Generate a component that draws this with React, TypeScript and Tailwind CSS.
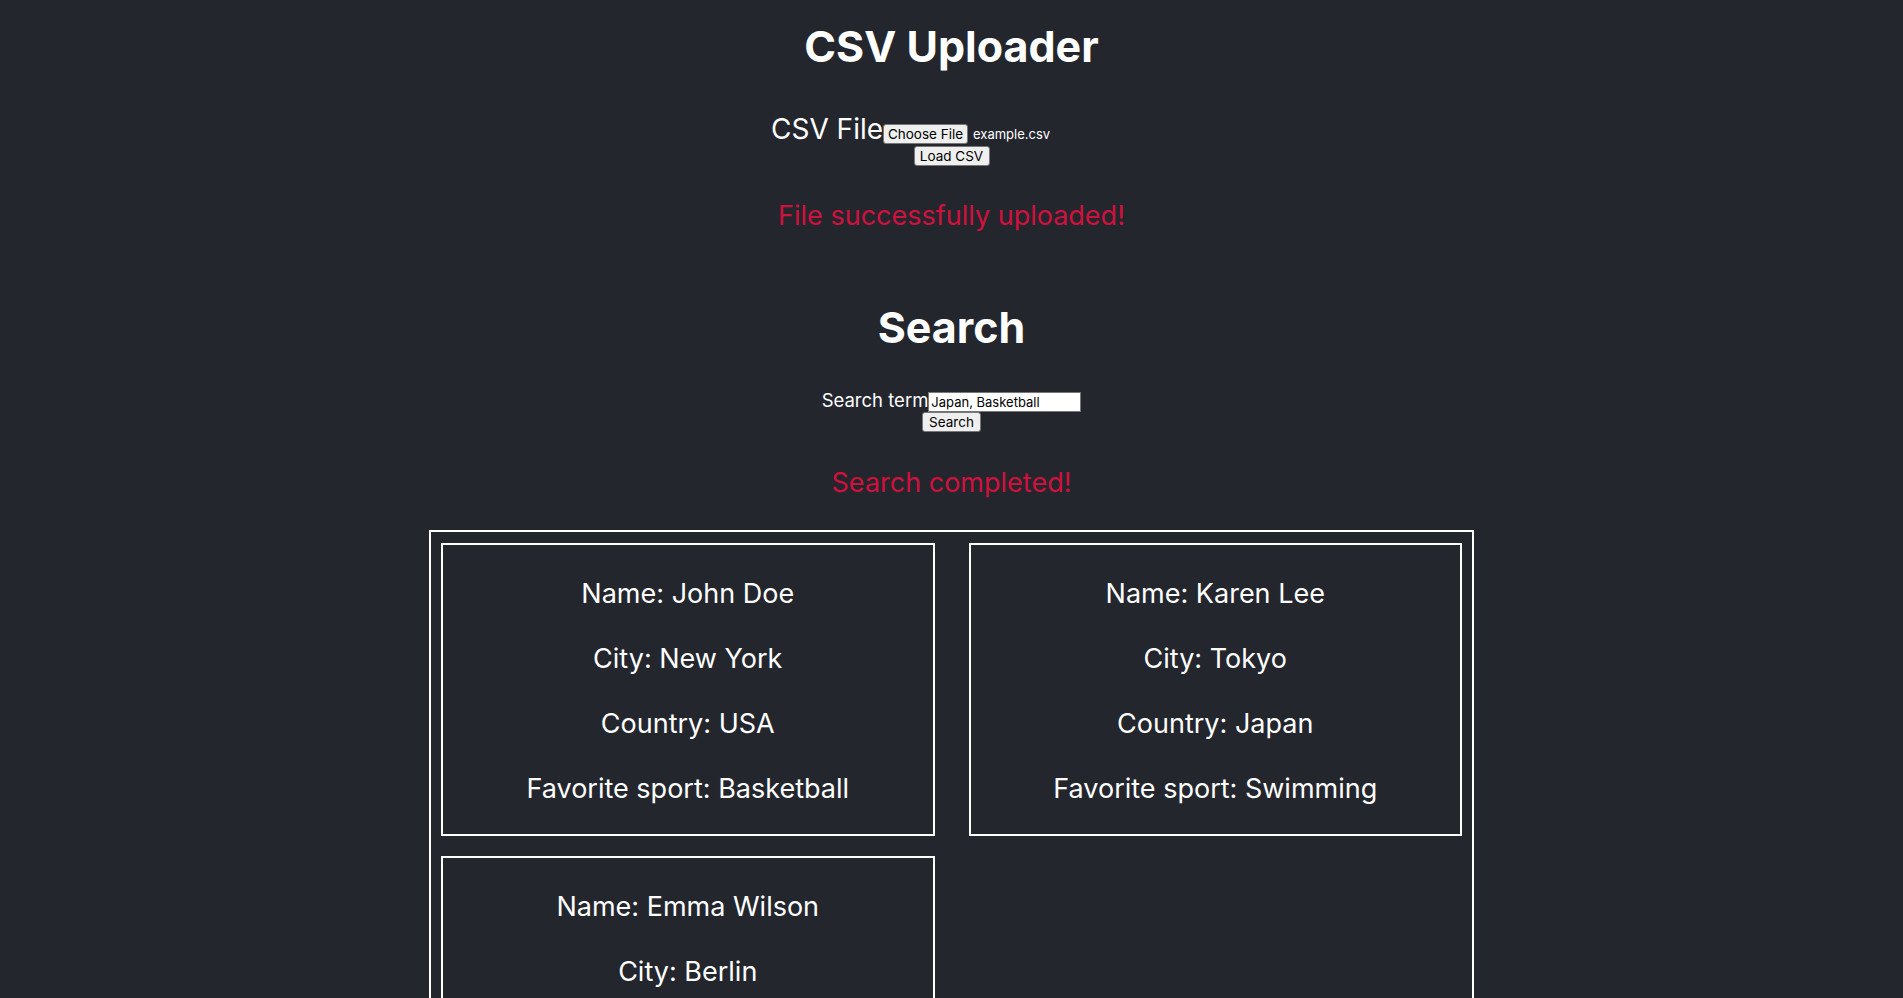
import React from "react";

type Person = {
  name: string;
  city: string;
  country: string;
  sport: string;
};

const results: Person[] = [
  { name: "John Doe", city: "New York", country: "USA", sport: "Basketball" },
  { name: "Karen Lee", city: "Tokyo", country: "Japan", sport: "Swimming" },
  { name: "Emma Wilson", city: "Berlin", country: "Germany", sport: "Basketball" },
];

function NativeButton({ label, width }: { label: string; width: string }) {
  return (
    <button
      type="button"
      className={`inline-flex h-[20px] items-center justify-center rounded-[3px] border border-[#767676] bg-[#efefef] text-[13.5px] leading-[16px] text-black ${width}`}
    >
      {label}
    </button>
  );
}

function PersonCard({ person }: { person: Person }) {
  return (
    <div className="flex flex-col gap-[28px] border-2 border-white pb-[27px] pt-[30px] text-[27px] leading-[37px]">
      <p>Name: {person.name}</p>
      <p>City: {person.city}</p>
      <p>Country: {person.country}</p>
      <p>Favorite sport: {person.sport}</p>
    </div>
  );
}

export default function App() {
  return (
    <div
      className="min-h-screen bg-[#24262e] pb-10 text-center text-white"
      style={{ fontFamily: "Inter, 'Noto Sans', sans-serif" }}
    >
      <h1 className="pt-[20px] text-[43px] font-bold leading-[53px]">CSV Uploader</h1>

      <form className="mt-[39px]">
        <div className="flex items-baseline justify-center">
          <label className="text-[28px] leading-[35px]">CSV File</label>
          <div className="flex w-[249px] items-baseline">
            <NativeButton label="Choose File" width="w-[85px]" />
            <span className="ml-[5px] text-[13px]">example.csv</span>
          </div>
        </div>
        <div className="-mt-px flex justify-center">
          <NativeButton label="Load CSV" width="w-[76px]" />
        </div>
      </form>

      <p className="mt-[32px] text-[27px] leading-[35px] text-[#d0113d]">
        File successfully uploaded!
      </p>

      <h2 className="mt-[68px] text-[43px] font-bold leading-[53px]">Search</h2>

      <form className="mt-[34px]">
        <div className="flex items-baseline justify-center">
          <label className="text-[18.5px] leading-[24px]">Search term</label>
          <input
            type="text"
            readOnly
            value="Japan, Basketball"
            className="h-[20px] w-[153px] border border-[#767676] bg-white px-[2px] text-[13px] text-black outline-none"
          />
        </div>
        <div className="flex justify-center">
          <NativeButton label="Search" width="w-[59px]" />
        </div>
      </form>

      <p className="mt-[33px] text-[27px] leading-[35px] text-[#d0113d]">Search completed!</p>

      <div className="mx-auto mt-[30px] grid w-[1045px] grid-cols-2 gap-x-[34px] gap-y-[20px] border-2 border-white px-[10px] pb-[12px] pt-[11px]">
        {results.map((p) => (
          <PersonCard key={p.name} person={p} />
        ))}
      </div>
    </div>
  );
}
